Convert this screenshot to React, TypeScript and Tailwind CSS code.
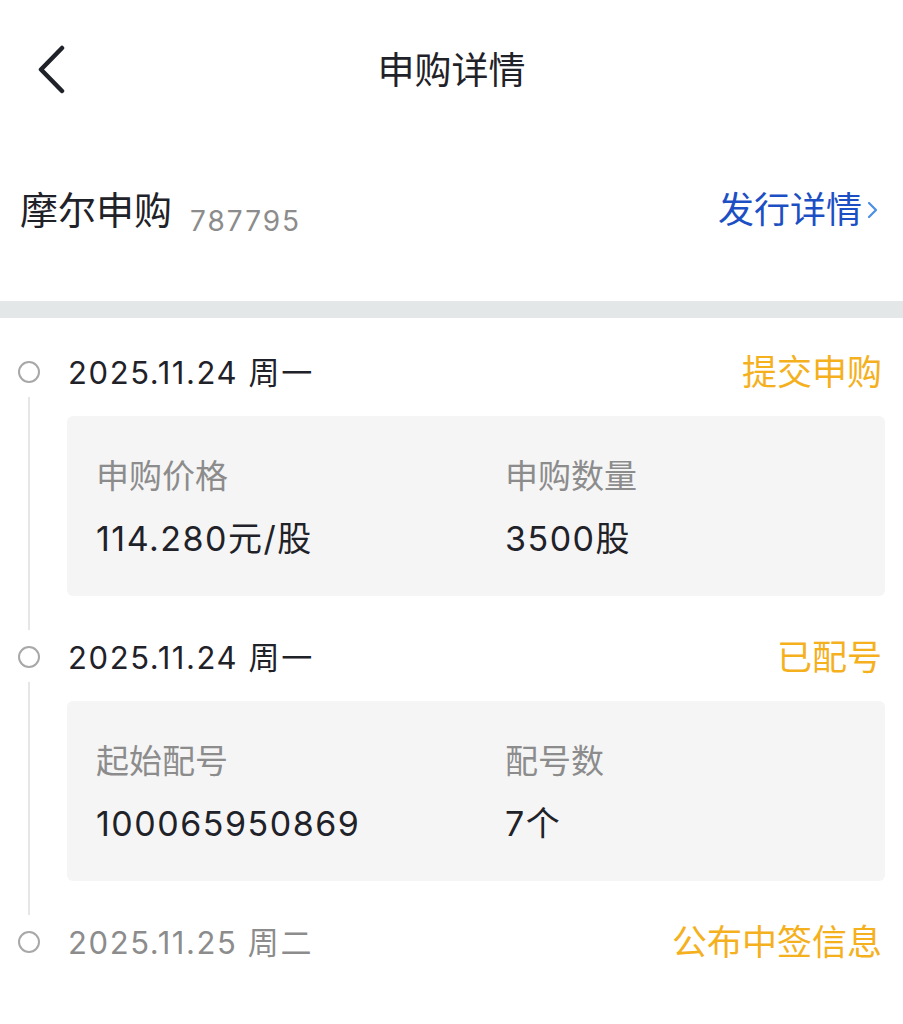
const FONT = "font-['Inter','Noto_Sans_CJK_SC',sans-serif]";

type Field = { label: string; value: string };

type Step = {
  date: string;
  status: string;
  muted?: boolean;
  fields?: [Field, Field];
};

const steps: Step[] = [
  {
    date: '2025.11.24 周一',
    status: '提交申购',
    fields: [
      { label: '申购价格', value: '114.280元/股' },
      { label: '申购数量', value: '3500股' },
    ],
  },
  {
    date: '2025.11.24 周一',
    status: '已配号',
    fields: [
      { label: '起始配号', value: '100065950869' },
      { label: '配号数', value: '7个' },
    ],
  },
  { date: '2025.11.25 周二', status: '公布中签信息', muted: true },
];

function BackIcon() {
  return (
    <svg width="30" height="50" viewBox="0 0 30 50" fill="none">
      <path d="M26 3 L5 24.5 L26 46" stroke="#1f2228" strokeWidth="4.5" strokeLinecap="round" strokeLinejoin="round" />
    </svg>
  );
}

function SmallChevron() {
  return (
    <svg width="14" height="20" viewBox="0 0 14 20" fill="none">
      <path d="M4 3 L11 10 L4 17" stroke="#4a8fe6" strokeWidth="2.2" strokeLinecap="round" strokeLinejoin="round" />
    </svg>
  );
}

export default function App() {
  return (
    <div className={`min-h-screen w-full bg-white ${FONT}`}>
      {/* Nav bar */}
      <div className="grid h-[140px] grid-cols-[1fr_auto_1fr] items-center">
        <div className="pl-[36px]">
          <BackIcon />
        </div>
        <h1 className="text-[37px] leading-none text-[#1f2228]">申购详情</h1>
        <div />
      </div>

      {/* Stock name row */}
      <div className="flex h-[161px] items-start justify-between pl-[20px] pr-[24px] pt-[51px]">
        <div className="flex items-end gap-[18px]">
          <span className="text-[38px] leading-none text-[#1f2228]">摩尔申购</span>
          <span className="mb-[-6px] text-[28px] leading-none tracking-[2px] text-[#8c8c8c]">787795</span>
        </div>
        <div className="flex items-center gap-[3px] pt-[1px]">
          <span className="text-[36px] leading-none text-[#1d4fc4]">发行详情</span>
          <SmallChevron />
        </div>
      </div>

      {/* Divider band */}
      <div className="h-[17px] bg-[#e4e7e8]" />

      {/* Timeline */}
      <div className="pt-[32px]">
        {steps.map((step, i) => (
          <div key={i}>
            <div className="flex h-[44px] items-center pl-[18px] pr-[21px]">
              <span className="h-[22px] w-[22px] shrink-0 rounded-full border-2 border-[#a8a8a8]" />
              <span
                className={`ml-[28px] text-[31px] leading-none tracking-[1.6px] ${
                  step.muted ? 'text-[#8c8c8c]' : 'text-[#1f2228]'
                }`}
              >
                {step.date}
              </span>
              <span className="ml-auto text-[35px] leading-none text-[#f5b01e]">{step.status}</span>
            </div>

            {step.fields && (
              <div className="mb-[5px] mt-[3px] flex">
                <div className="w-[67px] shrink-0 pl-[28px]">
                  <div className="h-full w-[2px] bg-[#e6e6e6]" />
                </div>
                <div className="mb-[34px] mr-[18px] mt-[19px] flex h-[180px] flex-1 rounded-[6px] bg-[#f5f5f5] pl-[29px] pt-[44px]">
                  {step.fields.map((f, j) => (
                    <div key={f.label} className={j === 0 ? 'w-[409px]' : 'flex-1'}>
                      <div className="text-[33px] leading-none text-[#8c8c8c]">{f.label}</div>
                      <div className="mt-[29px] text-[34px] leading-none tracking-[1.5px] text-[#1f2228]">{f.value}</div>
                    </div>
                  ))}
                </div>
              </div>
            )}
          </div>
        ))}
      </div>
    </div>
  );
}
